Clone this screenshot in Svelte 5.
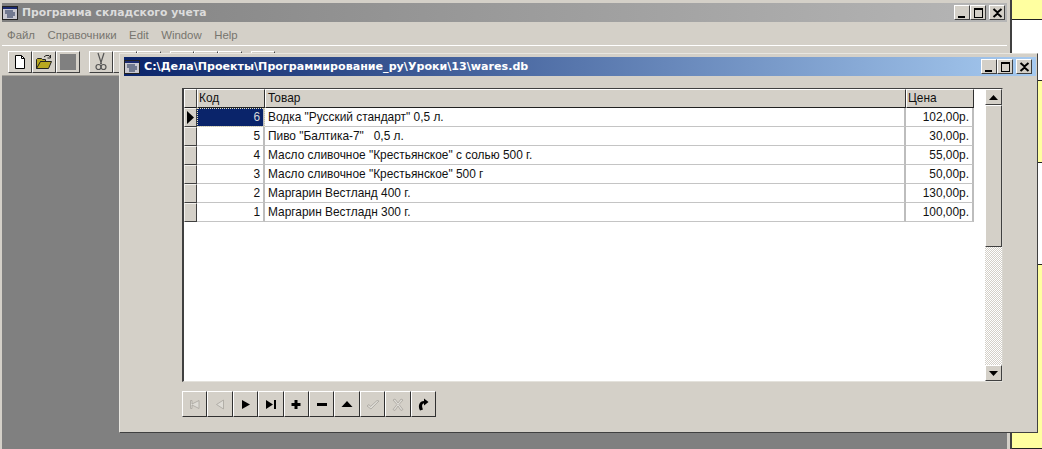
<script>
  const menus = ['Файл', 'Справочники', 'Edit', 'Window', 'Help'];
  const wares = [
    { code: 6, name: 'Водка "Русский стандарт" 0,5 л.', price: '102,00р.' },
    { code: 5, name: 'Пиво "Балтика-7"   0,5 л.', price: '30,00р.' },
    { code: 4, name: 'Масло сливочное "Крестьянское" с солью 500 г.', price: '55,00р.' },
    { code: 3, name: 'Масло сливочное "Крестьянское" 500 г', price: '50,00р.' },
    { code: 2, name: 'Маргарин Вестланд 400 г.', price: '130,00р.' },
    { code: 1, name: 'Маргарин Вестладн 300 г.', price: '100,00р.' }
  ];
  // кнопки навигатора: первые две и check/cancel неактивны
  const nav = [
    { off: true, d: 'M2.500 2.500h1.500v3.500l7-3.500v8l-7-3.500v3.500H2.500z' },
    { off: true, d: 'M10.500 2v9l-7-4.500z' },
    { d: 'M3 2v9l8-4.500z' },
    { d: 'M2 2v9l7-4.500zM10 2h2v9h-2z' },
    { d: 'M5.500 2h3v3h3v3h-3v3h-3V8h-3V5h3z' },
    { d: 'M2 5h10v3H2z' },
    { d: 'M7 3l5.500 6h-11z' },
    { off: true, d: 'M1 8l2-1.500 1.500 2L11 2.500l2 .5-8 8z' },
    { off: true, d: 'M2 2l2-1 3 4 3-4 2 1-4 4.500 4 5-2 1-3-4.500-3 4.500-2-1 4-5z' },
    { d: 'M4 12.500C1.500 8 3.500 3 8 3V.5l4.500 3.500L8 7.500V5.500C6 5.500 5.500 8 7 11.500z' }
  ];
</script>

{#snippet appIcon()}
  <svg class="appicon" viewBox="0 0 16 16" width="16" height="16">
    <rect x="0.5" y="1.5" width="15" height="13" fill="#c8c8d0" stroke="#222" />
    <rect x="1" y="2" width="14" height="2" fill="#1a2a70" />
    <path d="M3 6h8M3 8h10M5 10h8M5 12h6" stroke="#1a2a50" />
  </svg>
{/snippet}

{#snippet caption(gap)}
  <div class="capbtns" style="--gap:{gap}px">
    <button class="cap"><svg viewBox="0 0 15 14" width="15" height="14"><path d="M3 10h7v2H3z" /></svg></button>
    <button class="cap"><svg viewBox="0 0 15 14" width="15" height="14"><path d="M3 2h9v10H3zM4 4v7h7V4z" fill-rule="evenodd" /></svg></button>
    <button class="cap close"><svg viewBox="0 0 15 14" width="15" height="14"><path d="M3.500 3l4 3.500 4-3.500M3.500 11l4-3.500 4 3.500" fill="none" stroke="#000" stroke-width="2" /></svg></button>
  </div>
{/snippet}

<div class="desktop">
  <div class="main">
    <div class="titlebar main-title">
      {@render appIcon()}
      <span>Программа складского учета</span>
      {@render caption(2)}
    </div>
    <div class="menubar">
      {#each menus as m}<span>{m}</span>{/each}
    </div>
    <div class="toolbar">
      <button class="tool">
        <svg viewBox="0 0 16 16" width="16" height="16"><path d="M3.500 1.500h6l3 3v10h-9z" fill="#fff" stroke="#000" /><path d="M9.500 1.500v3h3" fill="none" stroke="#000" /></svg>
      </button>
      <button class="tool">
        <svg viewBox="0 0 18 16" width="18" height="16"><path d="M1.500 14.500v-9l1-1h4l1 1h3v2H5.500l-4 7h12l3-7h-11" fill="#b8a820" stroke="#222" /><path d="M9 3l2-1.500h3l1.500 2M15.500 1v3h-3" fill="none" stroke="#222" /></svg>
      </button>
      <button class="tool"><span class="stopbox"></span></button>
      <span class="sep"></span>
      <button class="tool">
        <svg viewBox="0 0 16 20" width="16" height="20"><path d="M5 1l3.500 11M11 1L7.500 12" stroke="#555" stroke-width="1.200" fill="none" /><circle cx="5.500" cy="15" r="2.500" fill="none" stroke="#555" stroke-width="1.200" /><circle cx="10.500" cy="15" r="2.500" fill="none" stroke="#555" stroke-width="1.200" /></svg>
      </button>
      <button class="tool"></button>
      <button class="tool"></button>
      <span class="sep"></span>
      <button class="tool"></button>
      <button class="tool"></button>
      <button class="tool"></button>
      <span class="sep"></span>
      <button class="tool"></button>
    </div>
    <div class="client"></div>
  </div>

  <div class="side">
    <div class="yellow s1"></div>
    <div class="white s2"></div>
    <div class="yellow s3"></div>
    <div class="white s4"></div>
    <div class="yellow s5"></div>
  </div>

  <div class="child">
    <div class="titlebar child-title">
      {@render appIcon()}
      <span>C:\Дела\Проекты\Программирование_ру\Уроки\13\wares.db</span>
      {@render caption(4)}
    </div>
    <div class="gridbox">
      <div class="table">
        <div class="ind head"></div>
        <div class="hcell">Код</div>
        <div class="hcell wide">Товар</div>
        <div class="hcell">Цена</div>
        {#each wares as w, i}
          <div class="ind">
            {#if i === 0}<svg viewBox="0 0 9 13" width="9" height="13"><path d="M1 0v13l7-6.500z" /></svg>{/if}
          </div>
          <div class="cell num" class:current={i === 0}>{w.code}</div>
          <div class="cell">{w.name}</div>
          <div class="cell num">{w.price}</div>
        {/each}
      </div>
      <div class="scroll">
        <button class="sbtn"><svg viewBox="0 0 9 5" width="9" height="5"><path d="M4.500 0L9 5H0z" /></svg></button>
        <div class="thumb"></div>
        <div class="track"></div>
        <button class="sbtn"><svg viewBox="0 0 9 5" width="9" height="5"><path d="M0 0h9L4.500 5z" /></svg></button>
      </div>
    </div>
    <div class="navigator">
      {#each nav as b}
        <button class="navbtn" class:off={b.off}>
          <svg viewBox="0 0 14 13" width="14" height="13"><path d={b.d} /></svg>
        </button>
      {/each}
    </div>
  </div>
</div>

<style>
  :global(body) {
    margin: 0;
    background: #d4d0c8;
  }
  button {
    padding: 0;
    margin: 0;
    font: inherit;
  }
  .desktop {
    position: relative;
    width: 1042px;
    height: 449px;
    overflow: hidden;
    display: flex;
    font-family: "Liberation Sans", Arial, sans-serif;
    font-size: 11.9px;
    color: #111;
  }

  /* главное окно */
  .main {
    width: 1012px;
    flex-shrink: 0;
    box-sizing: border-box;
    display: flex;
    flex-direction: column;
    background: #d4d0c8;
    padding: 3px 3px 0 2px;
    border-right: 2px solid #404040;
  }
  .titlebar {
    display: flex;
    align-items: center;
    font-family: "DejaVu Sans", sans-serif;
    font-weight: bold;
    font-size: 11px;
    box-sizing: border-box;
    flex-shrink: 0;
  }
  .appicon {
    flex-shrink: 0;
    margin-right: 4px;
  }
  .main-title {
    height: 19px;
    font-size: 10.8px;
    background: linear-gradient(90deg, #7f7f7f, #b6b6b6);
    color: #dcdcdc;
  }
  .menubar {
    height: 21px;
    margin-top: 2px;
    padding-left: 5px;
    display: flex;
    align-items: center;
    gap: 12.500px;
    font-size: 11.400px;
    color: #77756f;
    border-bottom: 1px solid #fff;
    flex-shrink: 0;
  }
  .toolbar {
    height: 25px;
    padding: 5px 0 0 6px;
    display: flex;
    align-items: flex-start;
    flex-shrink: 0;
    box-shadow: inset 0 -1px 0 #a8a59e;
  }
  .tool {
    width: 24px;
    height: 22px;
    flex-shrink: 0;
    box-sizing: border-box;
    display: flex;
    align-items: center;
    justify-content: center;
    background: #d4d0c8;
    border: 1px solid;
    border-color: #fff #404040 #404040 #fff;
  }
  .sep {
    width: 9px;
    flex-shrink: 0;
  }
  .stopbox {
    width: 16px;
    height: 16px;
    background: #808080;
  }
  .client {
    flex: 1;
    background: #808080;
  }

  /* полоса фона справа */
  .side {
    flex: 1;
    display: flex;
    flex-direction: column;
  }
  .yellow {
    background: #ffffa0;
  }
  .white {
    background: #fff;
  }
  .side > div {
    border-bottom: 1px solid #222;
    box-sizing: border-box;
  }
  .s1 { height: 20px; }
  .s2 { height: 61px; }
  .s3 { height: 82px; }
  .s4 { height: 102px; }
  .s5 { flex: 1; }

  /* дочернее окно */
  .child {
    position: absolute;
    left: 119px;
    top: 53px;
    width: 919px;
    height: 380px;
    box-sizing: border-box;
    background: #d4d0c8;
    padding: 3px 1px 0 4px;
    border: 1px solid;
    border-color: #e8e6e0 #404040 #404040 #e8e6e0;
    display: flex;
    flex-direction: column;
  }
  .child-title {
    height: 19px;
    font-size: 11.100px;
    background: linear-gradient(90deg, #0a246a, #a6caf0);
    color: #fff;
  }
  .capbtns {
    margin-left: auto;
    display: flex;
    padding-right: var(--gap);
  }
  .cap {
    width: 16px;
    height: 15px;
    box-sizing: border-box;
    display: flex;
    align-items: center;
    justify-content: center;
    background: #d4d0c8;
    border: 1px solid;
    border-color: #fff #404040 #404040 #fff;
    overflow: hidden;
  }
  .cap svg {
    flex-shrink: 0;
  }
  .cap.close {
    margin-left: 3px;
  }

  .gridbox {
    margin: 12px 0 0 58px;
    width: 821px;
    height: 294px;
    box-sizing: border-box;
    display: flex;
    justify-content: space-between;
    background: #fff;
    border: 1px solid;
    border-color: #404040 #d8d6d0 #e4e2dc #404040;
    border-left-width: 2px;
  }
  .table {
    display: grid;
    grid-template-columns: 13px 68px 641px 68px;
    grid-auto-rows: 19px;
    align-content: start;
  }
  .ind {
    box-sizing: border-box;
    background: #d4d0c8;
    border: 1px solid;
    border-color: #f4f2ee #404040 #404040 #f4f2ee;
    display: flex;
    align-items: center;
    justify-content: center;
  }
  .ind svg {
    flex-shrink: 0;
  }
  .head {
    border-color: #fff #404040 #202020 #fff;
  }
  .hcell {
    box-sizing: border-box;
    background: #d4d0c8;
    border: 1px solid;
    border-color: #fff #303030 #202020 #fff;
    padding: 1px 0 0 1px;
    line-height: 14px;
  }
  .hcell.wide {
    padding-left: 2px;
  }
  .cell {
    box-sizing: border-box;
    border-right: 2px solid #bdbdbd;
    border-bottom: 1px solid #c4c4c4;
    padding: 2px 0 0 3px;
    line-height: 14px;
    white-space: pre;
  }
  .num {
    text-align: right;
    padding: 2px 3px 0 0;
  }
  .current {
    background: #0a246a;
    color: #d8d8d8;
    outline: 1px dotted #e8e4c0;
    outline-offset: -1px;
  }
  .scroll {
    width: 17px;
    display: flex;
    flex-direction: column;
  }
  .sbtn {
    height: 16px;
    box-sizing: border-box;
    display: flex;
    align-items: center;
    justify-content: center;
    background: #d4d0c8;
    border: 1px solid;
    border-color: #fff #404040 #404040 #fff;
    flex-shrink: 0;
  }
  .thumb {
    height: 142px;
    box-sizing: border-box;
    background: #d4d0c8;
    border: 1px solid;
    border-color: #fff #404040 #404040 #fff;
    flex-shrink: 0;
  }
  .track {
    flex: 1;
    background: repeating-conic-gradient(#d4d0c8 0 25%, #fff 0 50%) 0 0 / 2px 2px;
  }

  .navigator {
    margin: 9px 0 0 58px;
    width: 254px;
    height: 26px;
    display: flex;
  }
  .navbtn {
    flex: 1;
    box-sizing: border-box;
    display: flex;
    align-items: center;
    justify-content: center;
    background: #d4d0c8;
    border: 1px solid;
    border-color: #fff #303030 #303030 #fff;
  }
  .navbtn svg {
    fill: #000;
  }
  .navbtn.off svg {
    fill: #dedcd6;
    stroke: #a8a59e;
    stroke-width: 0.800;
  }
</style>
